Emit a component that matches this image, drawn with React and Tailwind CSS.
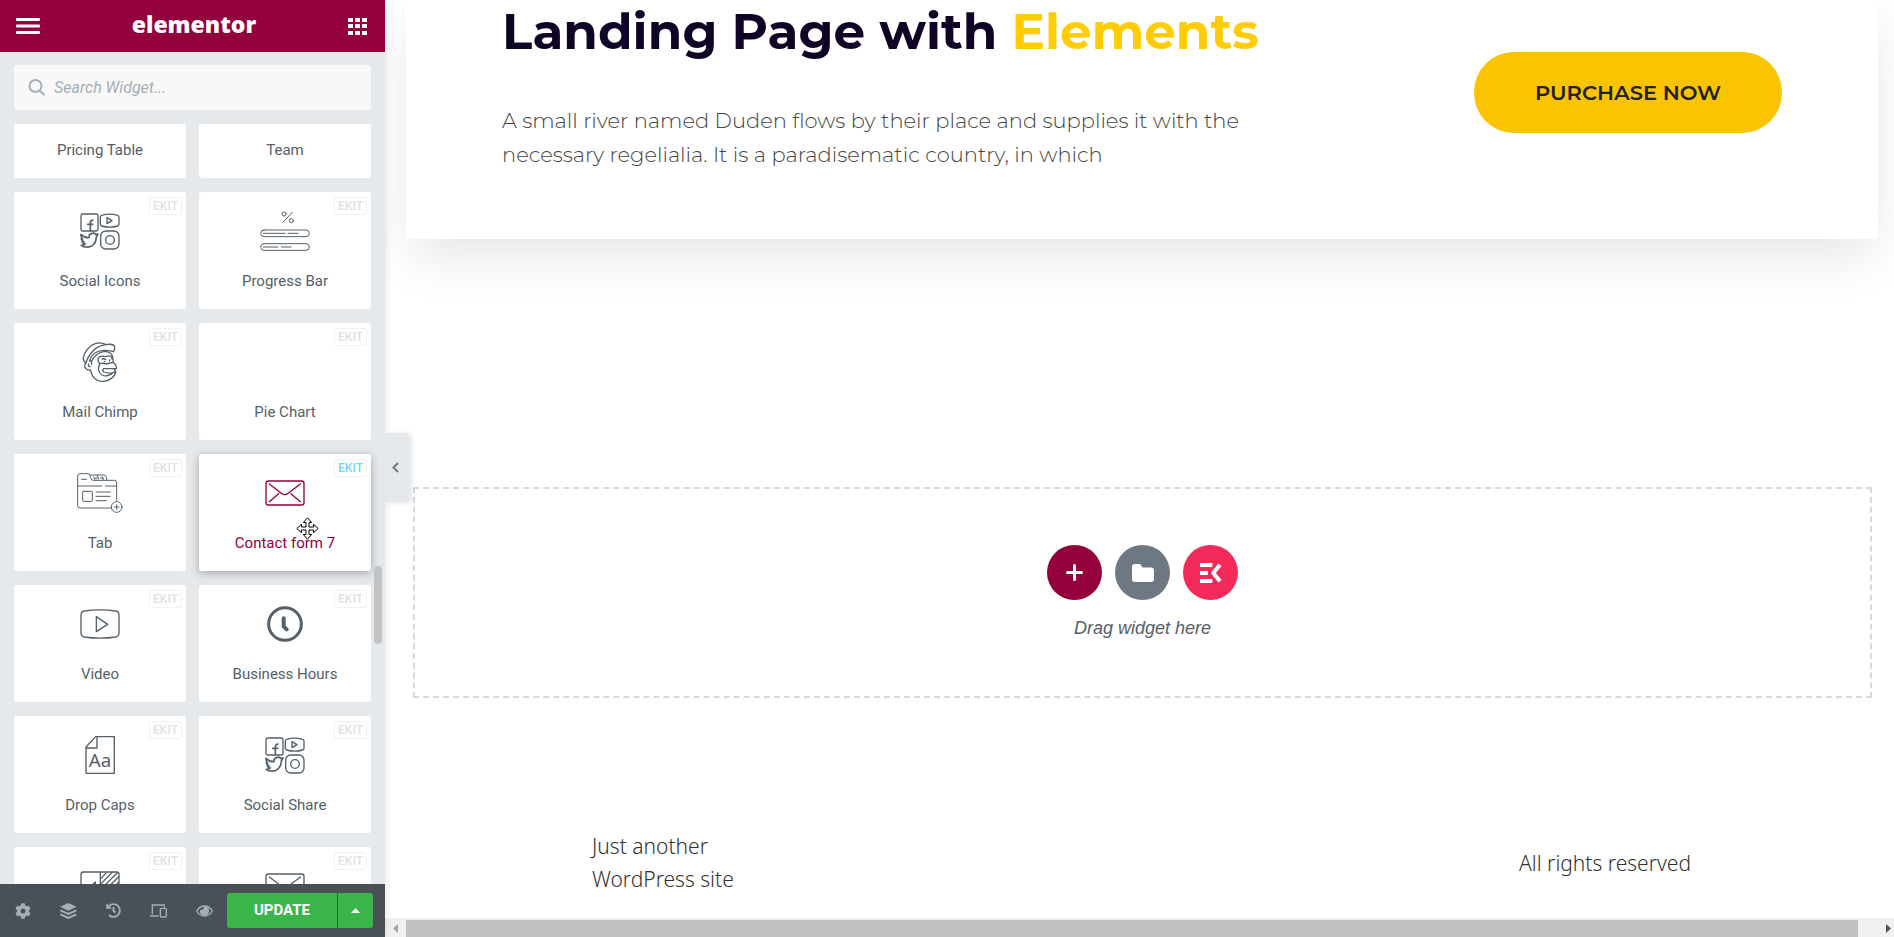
import React from "react";
import { FaCog, FaHistory } from "react-icons/fa";

const line = {
  fill: "none",
  stroke: "currentColor",
  strokeWidth: 4,
  strokeLinecap: "round",
  strokeLinejoin: "round",
};

function SocialIcon() {
  return (
    <svg width="40" height="37" viewBox="0 0 120 111" {...line}>
      <rect x="3" y="3" width="51" height="51" rx="5" />
      <path d="M31 53V31q0-10 8-10M23 34h15" strokeWidth="5" />
      <path d="M65 7q24-7 48 0q4 1 4 6v20q0 5-4 6q-24 7-48 0q-4-1-4-6V13q0-5 4-6z" />
      <path d="M81 14l15 9l-15 9z" />
      <path d="M3 64q11 11 24 10c-2-12 14-17 20-10l7-1l-5 9c0 20-14 32-30 30q-9 0-15-5q8 0 12-4q-8-1-9-7h5q-9-4-8-9l4 1q-6-6-5-14z" strokeWidth="5" />
      <rect x="62" y="54" width="55" height="54" rx="15" />
      <circle cx="90" cy="81" r="13" />
    </svg>
  );
}

function ProgressIcon() {
  return (
    <svg width="50" height="40" viewBox="0 0 150 120" {...line} strokeWidth="3">
      <circle cx="72" cy="9" r="6" />
      <circle cx="94" cy="29" r="6" />
      <path d="M97 4L69 34" />
      <rect x="2" y="57" width="146" height="20" rx="10" />
      <rect x="2" y="98" width="146" height="20" rx="10" />
      <path d="M10 67h65M84 67h30M10 108h44M64 108h29" />
    </svg>
  );
}

function ChimpIcon() {
  return (
    <svg width="37" height="40" viewBox="0 0 110 120" {...line}>
      <path d="M12 62C-2 56 3 38 15 23S45 0 62 4q5 1 9 4c10-2 22-2 26 5q2 7-3 16" />
      <path d="M12 62C18 38 38 12 71 8" />
      <path d="M22 56C30 32 50 18 94 29" />
      <path d="M27 60C33 44 49 31 67 28q14 0 22 10q5 10 4 24" />
      <path d="M12 62q-6 4-4 13q5 11 17 9q3 17 14 27c15 12 42 8 56-9q4-5 6-12" />
      <path d="M22 56q8 0 6 10M24 74q-7-1-5-8" />
      <path d="M71 44q-17-5-22 4q-4 10 4 17M71 44q10-5 17 0l2 8M60 51q6-2 11 2M67 58v1M82 54v3" />
      <path d="M53 65c-7 14-5 27 7 34c10 5 24 2 34-8M53 65q10-3 19 1l20-5q10 4 11 18l-6 5l3 7q-20 5-35-1q-6-5-1-10q15-1 38-1" />
    </svg>
  );
}

function TabIcon() {
  return (
    <svg width="46" height="40" viewBox="0 0 138 120" {...line} strokeWidth="3">
      <path d="M102 105H9q-7 0-7-7V9q0-7 7-7h24q5 0 6 6l3 9q1 5 7 5h64q6 0 6 7v53" />
      <path d="M39 6h42q5 0 6 5l3 10M50 12l3 7q1 3 6 3M61 7l4 11M76 12l3 8M14 19h14M54 15h7M71 15h8M3 39h72M86 39h32" />
      <rect x="17" y="55" width="29" height="30" rx="2" />
      <path d="M57 57h43M57 70h43M57 83h31" />
      <circle cx="119" cy="102" r="16" />
      <path d="M119 95v14M112 102h14" />
    </svg>
  );
}

function MailIcon() {
  return (
    <svg width="40" height="26" viewBox="0 0 120 78" {...line}>
      <rect x="3" y="3" width="114" height="72" rx="7" />
      <path d="M13 12l38 29q8 6 17 0l38-29M13 65l28-24M106 65L78 41" />
    </svg>
  );
}

function VideoIcon() {
  return (
    <svg width="40" height="30" viewBox="0 0 120 90" {...line}>
      <path d="M13 6q47-7 94 0q10 2 10 12v54q0 10-10 12q-47 7-94 0q-10-2-10-12V18q0-10 10-12z" />
      <path d="M49 23v45l34-22z" />
    </svg>
  );
}

function ClockIcon() {
  return (
    <svg width="36" height="36" viewBox="0 0 108 108" {...line} strokeWidth="9">
      <circle cx="54" cy="54" r="49" />
      <path d="M50 37v24l9 9" strokeWidth="12" />
    </svg>
  );
}

function DropCapsIcon() {
  return (
    <svg width="30" height="38" viewBox="0 0 90 114" {...line}>
      <path d="M32 2h56v110H3V33L32 2zM36 3v33H3" />
      <text x="45" y="94" textAnchor="middle" fontSize="56" fill="currentColor" stroke="none" className="font-['Noto_Sans',sans-serif]">
        Aa
      </text>
    </svg>
  );
}

function CompareIcon() {
  return (
    <svg width="40" height="30" viewBox="0 0 120 90" {...line}>
      <rect x="3" y="3" width="114" height="84" rx="7" />
      <path d="M61 3v84M63 22L80 4M63 38L97 4M63 54L112 5M63 70L116 17M66 84L116 34M82 84L116 50M98 84L116 67" />
      <path d="M33 46l13-13v26z" fill="currentColor" />
    </svg>
  );
}

const widgets = [
  { id: "pricing", name: "Pricing Table", badge: false },
  { id: "team", name: "Team", badge: false },
  { id: "social", name: "Social Icons", Icon: SocialIcon },
  { id: "progress", name: "Progress Bar", Icon: ProgressIcon },
  { id: "chimp", name: "Mail Chimp", Icon: ChimpIcon },
  { id: "pie", name: "Pie Chart" },
  { id: "tab", name: "Tab", Icon: TabIcon },
  { id: "contact", name: "Contact form 7", Icon: MailIcon, active: true },
  { id: "video", name: "Video", Icon: VideoIcon },
  { id: "hours", name: "Business Hours", Icon: ClockIcon },
  { id: "dropcaps", name: "Drop Caps", Icon: DropCapsIcon },
  { id: "share", name: "Social Share", Icon: SocialIcon },
  { id: "compare", Icon: CompareIcon },
  { id: "mail", Icon: MailIcon },
];

function MoveCursor() {
  return (
    <svg
      className="pointer-events-none absolute top-[63px] left-[97px]"
      width="23"
      height="23"
      viewBox="0 0 23 23"
      fill="#fff"
      stroke="#000"
      strokeWidth="1"
    >
      <path d="M11.5 .8l4.2 4.7h-2.7v4.500h4.500V7.300l4.700 4.200l-4.700 4.200v-2.700h-4.500v4.500h2.700l-4.200 4.700l-4.200-4.700h2.700v-4.500H5.500v2.700L.8 11.500l4.700-4.200v2.700H10V5.500H7.300z" />
    </svg>
  );
}

function Widget({ id, name, Icon, active = false, badge = true }) {
  return (
    <button
      type="button"
      aria-label={name || id}
      className={
        "relative flex h-[117px] flex-col items-center rounded-[3px] bg-white pt-[18px] " +
        (active ? "text-[#93003c] shadow-[0_2px_8px_rgba(0,0,0,0.3)]" : "text-[#556068]")
      }
    >
      {badge && (
        <span
          className={
            "absolute top-[5px] right-1 rounded-[3px] border border-[#f1f1f2] px-[3px] text-xs leading-4 font-medium " +
            (active ? "text-[#71d7f7]" : "text-[#e0e1e3]")
          }
        >
          EKIT
        </span>
      )}
      <span className="flex h-[42px] items-center justify-center">{Icon && <Icon />}</span>
      {name && <span className="mt-[19px] text-[15px] leading-5">{name}</span>}
      {active && <MoveCursor />}
    </button>
  );
}

function Sidebar() {
  return (
    <aside className="relative z-10 flex w-[385px] shrink-0 flex-col bg-[#e6e9ec] font-[Roboto,sans-serif] shadow-[0_0_8px_rgba(0,0,0,0.12)]">
      <header className="flex h-[52px] shrink-0 items-center justify-between bg-[#93003c] pr-[18px] pl-4 text-white">
        <button type="button" aria-label="Menu">
          <svg width="24" height="16" viewBox="0 0 24 16" fill="currentColor">
            <rect width="24" height="3" rx="1" />
            <rect y="6.500" width="24" height="3" rx="1" />
            <rect y="13" width="24" height="3" rx="1" />
          </svg>
        </button>
        <span className="pb-1 font-['Open_Sans',sans-serif] text-[23px] leading-8 font-extrabold">elementor</span>
        <button type="button" aria-label="Widgets">
          <svg width="19" height="17" viewBox="0 0 19 17" fill="currentColor">
            <path d="M0 0h5v4H0zM7 0h5v4H7zM14 0h5v4h-5zM0 6h5v4H0zM7 6h5v4H7zM14 6h5v4h-5zM0 13h5v4H0zM7 13h5v4H7zM14 13h5v4h-5z" />
          </svg>
        </button>
      </header>

      <div className="shrink-0 px-[14px] pt-[13px] pb-[14px]">
        <label className="flex h-[45px] items-center gap-[9px] rounded-[3px] bg-[#f8f8f8] px-[14px] text-[#a4afb7]">
          <svg width="17" height="17" viewBox="0 0 17 17" fill="none" stroke="currentColor" strokeWidth="2">
            <circle cx="7.500" cy="7" r="6" />
            <path d="M11.500 11.500l4.500 4" strokeLinecap="round" />
          </svg>
          <input
            type="text"
            aria-label="Search Widget"
            placeholder="Search Widget..."
            className="min-w-0 flex-1 bg-transparent text-base leading-5 italic outline-none placeholder:text-[#a4afb7]"
          />
        </label>
      </div>

      <div className="relative min-h-0 flex-1 overflow-hidden">
        <div className="-mt-[63px] grid grid-cols-2 gap-x-[13px] gap-y-[14px] px-[14px]">
          {widgets.map((w) => (
            <Widget key={w.id} {...w} />
          ))}
        </div>
        <div className="absolute top-[442px] right-[3px] h-[78px] w-2 rounded-full bg-[#c1c3c5]" />
      </div>

      <footer className="flex h-[53px] shrink-0 items-center justify-between bg-[#495157] pr-3 pl-[15px] text-[#a4afb7]">
        <div className="flex items-center gap-[29px]">
          <button type="button" aria-label="Settings">
            <FaCog size={16} />
          </button>
          <button type="button" aria-label="Navigator">
            <svg width="17" height="16" viewBox="0 0 51 48">
              <path d="M25 0L50 11L25 23L0 11z" fill="currentColor" />
              <path d="M1 22l24 11l24-11M1 34l24 11l24-11" fill="none" stroke="currentColor" strokeWidth="6" />
            </svg>
          </button>
          <button type="button" aria-label="History">
            <FaHistory size={15} />
          </button>
          <button type="button" aria-label="Responsive mode">
            <svg width="17" height="14" viewBox="0 0 51 42" fill="none" stroke="currentColor" strokeWidth="4">
              <path d="M7 31V3h36v7M0 36h26" />
              <rect x="31" y="13" width="18" height="26" rx="3" />
            </svg>
          </button>
          <button type="button" aria-label="Preview">
            <svg width="17" height="12" viewBox="0 0 51 36">
              <path d="M2 18C14-2 37-2 49 18C37 38 14 38 2 18z" fill="none" stroke="currentColor" strokeWidth="4" />
              <path d="M25 4a14 14 0 1 1-13 10q9 4 13-10z" fill="currentColor" />
            </svg>
          </button>
        </div>
        <div className="flex gap-px text-white">
          <button type="button" className="h-[35px] w-[110px] rounded-l-[3px] bg-[#39b54a] text-[15px] font-bold">
            UPDATE
          </button>
          <button type="button" aria-label="Save options" className="flex h-[35px] w-[35px] items-center justify-center rounded-r-[3px] bg-[#39b54a]">
            <svg width="9" height="5" viewBox="0 0 9 5" fill="currentColor">
              <path d="M4.500 0L9 5H0z" />
            </svg>
          </button>
        </div>
      </footer>

      <button
        type="button"
        aria-label="Collapse panel"
        className="absolute top-[433px] left-full flex h-[69px] w-6 items-center justify-center rounded-r-[3px] bg-[#e6e9ec] pr-1 text-[#6d7882] shadow-[3px_1px_5px_rgba(0,0,0,0.1)]"
      >
        <svg width="7" height="11" viewBox="0 0 7 11" fill="none" stroke="currentColor" strokeWidth="2">
          <path d="M6 1L1.500 5.500L6 10" />
        </svg>
      </button>
    </aside>
  );
}

function Canvas() {
  return (
    <main className="flex min-w-0 flex-1 flex-col overflow-hidden bg-white">
      <section className="mr-4 ml-[21px] flex items-start justify-between px-24 pb-[67px] font-[Montserrat,Inter,sans-serif] shadow-[0_20px_50px_-5px_rgba(0,0,0,0.11)]">
        <div className="w-[760px]">
          <h1 className="text-[50px] leading-[64px] font-bold whitespace-nowrap text-[#0f0425]">
            Landing Page with <span className="text-[#ffcc05]">Elements</span>
          </h1>
          <p className="mt-10 text-[21px] leading-[34px] font-light text-[#444]">
            A small river named Duden flows by their place and supplies it with the necessary regelialia. It is a
            paradisematic country, in which
          </p>
        </div>
        <a href="#purchase" className="mt-[52px] flex h-[81px] w-[308px] items-center justify-center rounded-[40px] bg-[#fbc402] text-[21px] font-semibold text-[#222]">
          PURCHASE NOW
        </a>
      </section>

      <section className="mt-[248px] mr-[22px] ml-7 flex h-[211px] flex-col items-center border-2 border-dashed border-[#d5dadf] pt-14">
        <div className="flex gap-[13px]">
          <button type="button" aria-label="Add section" className="flex size-[55px] items-center justify-center rounded-full bg-[#93003c]">
            <svg width="17" height="17" viewBox="0 0 17 17" stroke="#fff" strokeWidth="3" strokeLinecap="round">
              <path d="M8.500 1.500v14M1.500 8.500h14" />
            </svg>
          </button>
          <button type="button" aria-label="Add template" className="flex size-[55px] items-center justify-center rounded-full bg-[#6d7882]">
            <svg width="22" height="18" viewBox="0 0 22 18" fill="#fff">
              <path d="M3 0h4.500q1 0 1.500 1l1.500 2.500H19q3 0 3 3V15q0 3-3 3H3q-3 0-3-3V3q0-3 3-3z" />
            </svg>
          </button>
          <button type="button" aria-label="ElementsKit library" className="flex size-[55px] items-center justify-center rounded-full bg-[#f42a5b]">
            <svg width="22" height="20" viewBox="0 0 66 60" fill="#fff">
              <path d="M0 0h37v12H0zM0 24h24v12H0zM0 48h37v12H0z" />
              <path d="M60 5L40 30L60 55" fill="none" stroke="#fff" strokeWidth="12" strokeLinejoin="round" />
            </svg>
          </button>
        </div>
        <p className="mt-[18px] font-['Liberation_Sans',Arial,sans-serif] text-lg leading-5 text-[#556068] italic">Drag widget here</p>
      </section>

      <footer className="mt-[132px] flex items-center justify-between pr-[203px] pl-[207px] font-['Noto_Sans',sans-serif] text-[21px] leading-[33px] font-light text-[#333]">
        <p className="w-[170px]">Just another WordPress site</p>
        <p>All rights reserved</p>
      </footer>

      <div className="mt-auto flex h-[19px] shrink-0 items-end justify-between bg-[#f0f0f0]">
        <svg className="mr-2 mb-1 ml-2" width="5" height="9" viewBox="0 0 5 9" fill="#a3a3a3">
          <path d="M5 0v9L0 4.500z" />
        </svg>
        <div className="mr-[28px] h-[17px] flex-1 bg-[#c1c1c1]" />
        <svg className="mr-[3px] mb-1" width="5" height="9" viewBox="0 0 5 9" fill="#505050">
          <path d="M0 0v9l5-4.500z" />
        </svg>
      </div>
    </main>
  );
}

export default function App() {
  return (
    <div className="flex h-screen overflow-hidden bg-white">
      <Sidebar />
      <Canvas />
    </div>
  );
}
